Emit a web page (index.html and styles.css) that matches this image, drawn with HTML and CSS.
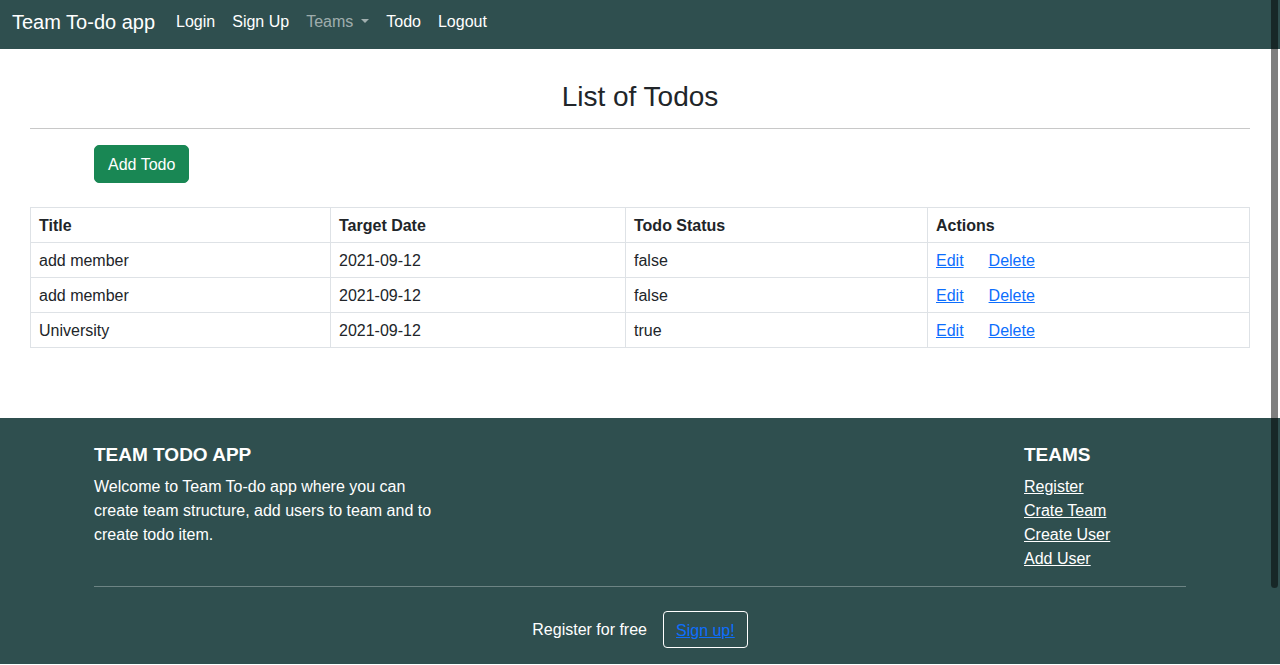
FILE: index.html
```html
<!DOCTYPE html>
<html lang="en">
<head>
<meta charset="utf-8">
<title>Team To-do app</title>
<link rel="stylesheet" href="styles.css">
</head>
<body>
<header class="navbar">
  <a class="brand" href="#">Team To-do app</a>
  <nav class="nav">
    <a class="nav-link" href="#">Login</a>
    <a class="nav-link" href="#">Sign Up</a>
    <a class="nav-link nav-muted dropdown-toggle" href="#">Teams</a>
    <a class="nav-link" href="#">Todo</a>
    <a class="nav-link" href="#">Logout</a>
  </nav>
</header>

<main class="main">
  <h3 class="page-title">List of Todos</h3>
  <hr class="divider">
  <div class="toolbar">
    <a class="btn-add" href="#">Add Todo</a>
  </div>
  <table class="todo-table">
    <colgroup>
      <col class="c1"><col class="c2"><col class="c3"><col class="c4">
    </colgroup>
    <thead>
      <tr><th>Title</th><th>Target Date</th><th>Todo Status</th><th>Actions</th></tr>
    </thead>
    <tbody>
      <tr><td>add member</td><td>2021-09-12</td><td>false</td><td><a class="act" href="#">Edit</a><a class="act" href="#">Delete</a></td></tr>
      <tr><td>add member</td><td>2021-09-12</td><td>false</td><td><a class="act" href="#">Edit</a><a class="act" href="#">Delete</a></td></tr>
      <tr><td>University</td><td>2021-09-12</td><td>true</td><td><a class="act" href="#">Edit</a><a class="act" href="#">Delete</a></td></tr>
    </tbody>
  </table>
</main>

<footer class="footer">
  <div class="footer-inner">
    <div class="footer-cols">
      <div class="about">
        <h5 class="footer-title">TEAM TODO APP</h5>
        <p class="about-text">Welcome to Team To-do app where you can create team structure, add users to team and to create todo item.</p>
      </div>
      <div class="links">
        <h5 class="footer-title">TEAMS</h5>
        <ul class="link-list">
          <li><a href="#">Register</a></li>
          <li><a href="#">Crate Team</a></li>
          <li><a href="#">Create User</a></li>
          <li><a href="#">Add User</a></li>
        </ul>
      </div>
    </div>
    <hr class="footer-rule">
    <div class="cta">
      <span class="cta-text">Register for free</span>
      <span class="btn-outline"><a href="#">Sign up!</a></span>
    </div>
  </div>
</footer>

<div class="scroll-thumb"></div>
</body>
</html>
```

FILE: styles.css
```css
* { box-sizing: border-box; }
html, body { margin: 0; padding: 0; }
body {
  font-family: "Liberation Sans", Arial, sans-serif;
  font-size: 16px;
  line-height: 24px;
  color: #212529;
  background: #fff;
}
a { text-decoration: none; }

/* navbar */
.navbar {
  height: 49px;
  background: #2f4f4f;
  display: flex;
  align-items: center;
  padding: 0 12px 6px;
}
.brand {
  color: #fff;
  font-size: 20px;
  line-height: 30px;
  margin-right: 13px;
}
.nav { display: flex; }
.nav-link {
  color: #fff;
  padding: 0 8px;
}
.nav-link + .nav-link { margin-left: 1px; }
.nav-muted { color: rgba(255,255,255,.55); }
.dropdown-toggle::after {
  content: "";
  display: inline-block;
  margin-left: 8px;
  vertical-align: 4px;
  border-top: 4px solid;
  border-left: 4px solid transparent;
  border-right: 4px solid transparent;
}

/* main */
.main { padding: 31px 30px 70px; }
.page-title {
  margin: 0;
  text-align: center;
  font-size: 28px;
  line-height: 34px;
  font-weight: 500;
}
.divider {
  margin: 14px 0 16px;
  border: 0;
  border-top: 1px solid #c8c8c8;
}
.toolbar { margin: 0 0 24px 64px; height: 38px; }
.btn-add {
  display: inline-block;
  background: #198754;
  color: #fff;
  border: 1px solid #198754;
  border-radius: 5px;
  padding: 7px 13px 5px;
  line-height: 24px;
}

.todo-table {
  width: 100%;
  border-collapse: collapse;
  table-layout: fixed;
}
.c1 { width: 300px; }
.c2 { width: 295px; }
.c3 { width: 302px; }
.todo-table th, .todo-table td {
  border: 1px solid #dee2e6;
  padding: 6px 8px 4px;
  text-align: left;
  line-height: 24px;
}
.todo-table th { font-weight: 700; }
.act { color: #0d6efd; text-decoration: underline; }
.act + .act { margin-left: 25px; }

/* footer */
.footer {
  background: #2f4f4f;
  color: #fff;
  padding: 25px 0 16px;
}
.footer-inner { width: 1092px; margin: 0 auto; }
.footer-cols { display: flex; justify-content: space-between; }
.about { width: 356px; }
.links { width: 162px; }
.footer-title {
  margin: 0 0 8px;
  font-size: 19px;
  line-height: 24px;
  font-weight: 700;
}
.about-text { margin: 0; }
.link-list { list-style: none; margin: 0; padding: 0; }
.link-list a { color: #fff; text-decoration: underline; }
.footer-rule {
  margin: 15px 0 24px;
  border: 0;
  border-top: 1px solid rgba(255,255,255,.3);
}
.cta {
  display: flex;
  justify-content: center;
  align-items: center;
  gap: 16px;
}
.cta-text { padding-top: 1px; }
.btn-outline {
  display: inline-block;
  border: 1px solid #fff;
  border-radius: 4px;
  padding: 7px 12px 4px;
  line-height: 24px;
}
.btn-outline a { color: #0d6efd; text-decoration: underline; }

.scroll-thumb {
  position: fixed;
  top: 0;
  right: 2px;
  width: 7px;
  height: 588px;
  background: rgba(0,0,0,.5);
  border-radius: 0 0 4px 4px;
}
```
